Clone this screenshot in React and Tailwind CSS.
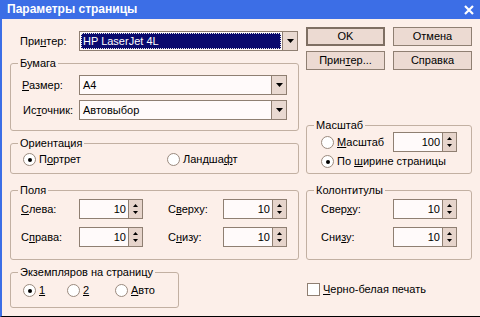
import React from 'react';

// mnemonic label: underlines the letter at index i
function Mn({ t, i }) {
  if (i == null) return <>{t}</>;
  return (
    <>
      {t.slice(0, i)}
      <span className="underline underline-offset-[1px]">{t[i]}</span>
      {t.slice(i + 1)}
    </>
  );
}

function Group({ title, className = '', children }) {
  return (
    <fieldset className={`border border-[#c2b0a2] rounded-[3px] ${className}`}>
      <legend className="ml-[7px] px-[2px] leading-[13px]">{title}</legend>
      {children}
    </fieldset>
  );
}

function Arrow() {
  return (
    <svg width="7" height="4" viewBox="0 0 7 4">
      <path d="M0 0h7L3.5 4z" fill="#000" />
    </svg>
  );
}

function Combo({ value, selected, className = '' }) {
  return (
    <div className={`flex h-[20px] border border-[#8f7f72] bg-[#fffafa] ${className}`}>
      <div className="flex-1 flex items-center p-[1px] min-w-0">
        {selected ? (
          <div className="h-full w-full bg-[#0a0a6e] text-white border border-dotted border-[#e8e8e8] flex items-center pl-[1px]">
            {value}
          </div>
        ) : (
          <span className="pl-[2px]">{value}</span>
        )}
      </div>
      <div className="w-[15px] border-l border-[#8f7f72] bg-[#e9d9d1] flex items-center justify-center">
        <Arrow />
      </div>
    </div>
  );
}

function Spin({ value }) {
  return (
    <div className="flex h-[20px] w-[64px] border border-[#8f7f72] bg-[#fffafa]">
      <div className="flex-1 flex items-center justify-end pr-[2px]">{value}</div>
      <div className="w-[14px] border-l border-[#8f7f72] bg-[#e6d4cb] flex flex-col items-center justify-center gap-[4px]">
        <svg width="5" height="3" viewBox="0 0 5 3"><path d="M2.5 0L5 3H0z" fill="#000" /></svg>
        <svg width="5" height="3" viewBox="0 0 5 3"><path d="M0 0h5L2.5 3z" fill="#000" /></svg>
      </div>
    </div>
  );
}

function Radio({ checked, children, className = '' }) {
  return (
    <div className={`flex items-center h-[13px] ${className}`}>
      <span className="w-[13px] h-[13px] shrink-0 rounded-full border border-[#9a8a7e] bg-white flex items-center justify-center">
        {checked && <span className="w-[4px] h-[4px] rounded-full bg-black" />}
      </span>
      <span className="ml-[3px]">{children}</span>
    </div>
  );
}

function Btn({ children, primary }) {
  return (
    <div
      className={`w-[79px] h-[19px] flex items-center justify-center bg-[#ecdad2] ${
        primary ? 'border-2 border-[#7f6f63]' : 'border border-[#8f7f72]'
      }`}
    >
      {children}
    </div>
  );
}

function SpinRow({ label, value, labelClass }) {
  return (
    <div className="flex items-center h-[20px]">
      <span className={labelClass}>{label}</span>
      <Spin value={value} />
    </div>
  );
}

export default function App() {
  return (
    <div className="w-[480px] h-[317px] bg-[#fcefe9] border-l-2 border-[#3c6ee6] border-b border-b-black flex flex-col text-[11px] leading-[13px] text-black font-['Liberation_Sans',Arial,sans-serif] overflow-hidden">
      {/* title bar */}
      <div className="h-[19px] shrink-0 bg-[#3c6ee6] flex items-center justify-between pl-[5px] pr-[6px]">
        <span className="text-white font-bold text-[12px] leading-[15px]">Параметры страницы</span>
        <svg width="10" height="10" viewBox="0 0 10 10">
          <path d="M1 1L9 9M9 1L1 9" stroke="#fff" strokeWidth="2.2" />
        </svg>
      </div>

      <div className="flex pl-[8px]">
        {/* left column */}
        <div className="w-[289px] flex flex-col">
          <div className="mt-[12px] h-[20px] flex items-center">
            <span className="w-[69px] pl-[10px]"><Mn t="Принтер:" i={3} /></span>
            <Combo value="HP LaserJet 4L" selected className="w-[219px]" />
          </div>

          <Group title="Бумага" className="mt-[6px] h-[74px]">
            <div className="flex flex-col pt-[5px] gap-[5px]">
              <div className="flex items-center h-[20px]">
                <span className="w-[68px] pl-[11px]"><Mn t="Размер:" i={0} /></span>
                <Combo value="A4" className="w-[208px]" />
              </div>
              <div className="flex items-center h-[20px]">
                <span className="w-[68px] pl-[12px]"><Mn t="Источник:" i={2} /></span>
                <Combo value="Автовыбор" className="w-[208px]" />
              </div>
            </div>
          </Group>

          <Group title="Ориентация" className="mt-[6px] h-[37px]">
            <div className="flex pt-[3px] pl-[12px]">
              <Radio checked className="w-[144px]"><Mn t="Портрет" i={1} /></Radio>
              <Radio><Mn t="Ландшафт" i={6} /></Radio>
            </div>
          </Group>

          <Group title="Поля" className="mt-[10px] h-[76px]">
            <div className="flex flex-col pt-[2px] gap-[8px]">
              <div className="flex items-center">
                <SpinRow label={<Mn t="Слева:" i={0} />} value="10" labelClass="w-[68px] pl-[10px]" />
                <SpinRow label={<Mn t="Сверху:" i={1} />} value="10" labelClass="w-[80px] pl-[25px]" />
              </div>
              <div className="flex items-center">
                <SpinRow label={<Mn t="Справа:" i={1} />} value="10" labelClass="w-[68px] pl-[10px]" />
                <SpinRow label={<Mn t="Снизу:" i={1} />} value="10" labelClass="w-[80px] pl-[25px]" />
              </div>
            </div>
          </Group>

          <Group title="Экземпляров на страницу" className="mt-[6px] h-[42px] w-[169px]">
            <div className="flex pt-[5px] pl-[12px]">
              <Radio checked className="w-[44px]"><Mn t="1" i={0} /></Radio>
              <Radio className="w-[48px]"><Mn t="2" i={0} /></Radio>
              <Radio><Mn t="Авто" i={0} /></Radio>
            </div>
          </Group>
        </div>

        {/* right column */}
        <div className="ml-[7px] w-[166px] flex flex-col">
          <div className="mt-[8px] flex gap-[8px]">
            <Btn primary>OK</Btn>
            <Btn>Отмена</Btn>
          </div>
          <div className="mt-[5px] flex gap-[8px]">
            <Btn><Mn t="Принтер..." i={4} /></Btn>
            <Btn>Справка</Btn>
          </div>

          <Group title="Масштаб" className="mt-[49px] h-[55px]">
            <div className="flex flex-col">
              <div className="flex items-center h-[20px]">
                <div className="w-[86px] pl-[14px]">
                  <Radio><Mn t="Масштаб" i={0} /></Radio>
                </div>
                <Spin value="100" />
              </div>
              <div className="mt-[3px] pl-[14px]">
                <Radio checked>По <Mn t="ширине" i={0} /> страницы</Radio>
              </div>
            </div>
          </Group>

          <Group title="Колонтитулы" className="mt-[10px] h-[76px]">
            <div className="flex flex-col pt-[2px] gap-[8px]">
              <SpinRow label={<Mn t="Сверху:" i={4} />} value="10" labelClass="w-[86px] pl-[14px]" />
              <SpinRow label={<Mn t="Снизу:" i={3} />} value="10" labelClass="w-[86px] pl-[14px]" />
            </div>
          </Group>

          <div className="mt-[23px] flex items-center h-[13px]">
            <span className="ml-[1px] w-[13px] h-[13px] border border-[#8f7f72] bg-white" />
            <span className="ml-[3px]"><Mn t="Черно-белая печать" i={0} /></span>
          </div>
        </div>
      </div>
    </div>
  );
}
